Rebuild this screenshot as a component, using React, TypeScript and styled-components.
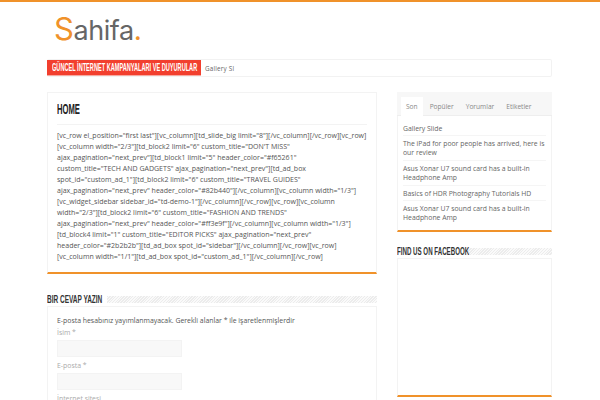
import React from 'react';
import styled, { createGlobalStyle } from 'styled-components';

const GlobalStyle = createGlobalStyle`
  html, body {
    margin: 0;
    padding: 0;
    height: 400px;
    overflow: hidden;
    background: #fff;
    font-family: "Open Sans", "Liberation Sans", sans-serif;
  }
`;

const orange = '#f0922a';
const headingFont = '"Liberation Sans", Arial, sans-serif';

const TopBar = styled.div`
  height: 2px;
  background: ${orange};
`;

const Wrapper = styled.div`
  width: 505px;
  margin-left: 47px;
`;

const LogoRow = styled.div`
  height: 57px;
  padding: 10px 0 0 7px;
  box-sizing: border-box;
  display: flex;
  align-items: baseline;
  font-family: Inter, Lato, sans-serif;
  line-height: 34px;
`;

const LogoLetter = styled.span<{ $accent?: boolean; $size: number; $spacing: number }>`
  font-size: ${(p) => p.$size}px;
  color: ${(p) => (p.$accent ? orange : '#666')};
  font-weight: 400;
  letter-spacing: ${(p) => p.$spacing}px;
`;

// the heading face is a tall condensed one, no installed font has those widths
const Condensed = styled.span<{ $scale: number }>`
  display: inline-block;
  white-space: nowrap;
  transform: scaleX(${(p) => p.$scale});
  transform-origin: left center;
`;

const Ticker = styled.div`
  height: 18px;
  box-sizing: border-box;
  display: flex;
  align-items: center;
  border: 1px solid #f2f2f2;
  border-left: 0;
  border-radius: 2px;
  margin-bottom: 15px;
`;

const TickerLabel = styled.div`
  height: 16px;
  width: 154px;
  flex-shrink: 0;
  box-sizing: border-box;
  padding-left: 5px;
  overflow: hidden;
  background: #f23f2e;
  color: #fff;
  font-family: ${headingFont};
  font-weight: 700;
  font-size: 10px;
  line-height: 15px;
  border-bottom: 1px solid #f7a9a0;
`;

const TickerText = styled.div`
  margin-left: 4px;
  font-size: 6.3px;
  color: #666;
  letter-spacing: 0.2px;
`;

const Columns = styled.div`
  display: flex;
  justify-content: space-between;
  align-items: flex-start;
`;

const Main = styled.div`
  width: 330px;
`;

const Sidebar = styled.div`
  width: 155px;
`;

const Card = styled.div<{ $accent?: boolean }>`
  box-sizing: border-box;
  border: 1px solid #f3f3f3;
  border-bottom: ${(p) => (p.$accent ? `2px solid ${orange}` : '1px solid #f3f3f3')};
  background: #fff;
`;

const PostCard = styled(Card)`
  height: 182px;
  padding: 0 9px;
`;

const PostTitle = styled.h1`
  margin: 0;
  height: 31px;
  border-bottom: 1px solid #f3f3f3;
  font-family: ${headingFont};
  font-size: 15px;
  font-weight: 700;
  line-height: 31px;
  color: #222;
`;

const Shortcode = styled.div`
  padding-top: 5px;
  font-size: 7.03px;
  line-height: 11px;
  color: #555;
  white-space: nowrap;
`;

const SectionHead = styled.div<{ $top: number; $bottom: number }>`
  display: flex;
  align-items: center;
  height: 12px;
  margin: ${(p) => p.$top}px 0 ${(p) => p.$bottom}px;
`;

const SectionTitle = styled.h3<{ $width: number }>`
  margin: 0 5px 0 0;
  width: ${(p) => p.$width}px;
  flex-shrink: 0;
  font-family: ${headingFont};
  font-size: 11px;
  font-weight: 700;
  line-height: 12px;
  color: #333;
`;

const Stripes = styled.div`
  flex: 1;
  height: 7px;
  background: repeating-linear-gradient(135deg, #ececec 0 1px, #fafafa 1px 2px);
`;

const CommentCard = styled(Card)`
  height: 94px;
  padding: 8px 9px 0;
  border-bottom: 0;
  overflow: hidden;
`;

const Notice = styled.p`
  margin: 0 0 3px;
  font-size: 6.9px;
  line-height: 11px;
  color: #555;
  white-space: nowrap;
`;

const FieldLabel = styled.label`
  display: block;
  margin-bottom: 3px;
  font-size: 6.9px;
  line-height: 8px;
  color: #aaa;
`;

const FieldBox = styled.div`
  width: 125px;
  height: 16.5px;
  margin-bottom: 5.5px;
  background: #f8f8f8;
  border: 1px solid #f3f3f3;
  box-sizing: border-box;
`;

const TabBar = styled.div`
  height: 24px;
  padding: 5px 0 0 4px;
  box-sizing: border-box;
  display: flex;
  background: #f7f7f7;
  border-bottom: 1px solid #eee;
`;

const Tab = styled.div<{ $active?: boolean }>`
  height: 19px;
  padding: 0 5px;
  margin-right: 2px;
  font-size: 6.6px;
  line-height: 20px;
  color: #888;
  background: ${(p) => (p.$active ? '#fff' : 'transparent')};
`;

const TabCard = styled(Card)`
  height: 116px;
  border-top: 0;
`;

const PostList = styled.ul`
  list-style: none;
  margin: 0;
  padding: 4.5px 5px 0;
`;

const PostItem = styled.li`
  padding: 3px 0 2.3px;
  border-bottom: 1px solid #f5f5f5;
  font-size: 6.85px;
  line-height: 9.25px;
  color: #666;
  white-space: nowrap;
  &:last-child {
    border-bottom: 0;
  }
`;

const FacebookCard = styled(Card)`
  height: 139px;
`;

const shortcodeLines = [
  '[vc_row el_position="first last"][vc_column][td_slide_big limit="8"][/vc_column][/vc_row][vc_row]',
  '[vc_column width="2/3"][td_block2 limit="6" custom_title="DON\'T MISS"',
  'ajax_pagination="next_prev"][td_block1 limit="5" header_color="#f65261"',
  'custom_title="TECH AND GADGETS" ajax_pagination="next_prev"][td_ad_box',
  'spot_id="custom_ad_1"][td_block2 limit="6" custom_title="TRAVEL GUIDES"',
  'ajax_pagination="next_prev" header_color="#82b440"][/vc_column][vc_column width="1/3"]',
  '[vc_widget_sidebar sidebar_id="td-demo-1"][/vc_column][/vc_row][vc_row][vc_column',
  'width="2/3"][td_block2 limit="6" custom_title="FASHION AND TRENDS"',
  'ajax_pagination="next_prev" header_color="#ff3e9f"][/vc_column][vc_column width="1/3"]',
  '[td_block4 limit="1" custom_title="EDITOR PICKS" ajax_pagination="next_prev"',
  'header_color="#2b2b2b"][td_ad_box spot_id="sidebar"][/vc_column][/vc_row][vc_row]',
  '[vc_column width="1/1"][td_ad_box spot_id="custom_ad_1"][/vc_column][/vc_row]',
];

const recentPosts = [
  ['Gallery Slide'],
  ['The iPad for poor people has arrived, here is', 'our review'],
  ['Asus Xonar U7 sound card has a built-in', 'Headphone Amp'],
  ['Basics of HDR Photography Tutorials HD'],
  ['Asus Xonar U7 sound card has a built-in', 'Headphone Amp'],
];

const tabs = ['Son', 'Popüler', 'Yorumlar', 'Etiketler'];

const App = () => {
  return (
    <>
      <GlobalStyle />
      <TopBar />
      <Wrapper>
        <LogoRow>
          <LogoLetter $accent $size={31} $spacing={-0.5}>S</LogoLetter>
          <LogoLetter $size={27} $spacing={-0.4}>ahifa</LogoLetter>
          <LogoLetter $accent $size={28} $spacing={0}>.</LogoLetter>
        </LogoRow>
        <Ticker>
          <TickerLabel>
            <Condensed $scale={0.56}>GÜNCEL İNTERNET KAMPANYALARI VE DUYURULAR</Condensed>
          </TickerLabel>
          <TickerText>Gallery Sl</TickerText>
        </Ticker>
        <Columns>
          <Main>
            <PostCard $accent>
              <PostTitle>
                <Condensed $scale={0.51}>HOME</Condensed>
              </PostTitle>
              <Shortcode>
                {shortcodeLines.map((line) => (
                  <div key={line}>{line}</div>
                ))}
              </Shortcode>
            </PostCard>
            <SectionHead $top={19} $bottom={1}>
              <SectionTitle $width={55}>
                <Condensed $scale={0.59}>BIR CEVAP YAZIN</Condensed>
              </SectionTitle>
              <Stripes />
            </SectionHead>
            <CommentCard>
              <Notice>E-posta hesabınız yayımlanmayacak. Gerekli alanlar * ile işaretlenmişlerdir</Notice>
              <FieldLabel>İsim *</FieldLabel>
              <FieldBox />
              <FieldLabel>E-posta *</FieldLabel>
              <FieldBox />
              <FieldLabel>İnternet sitesi</FieldLabel>
            </CommentCard>
          </Main>
          <Sidebar>
            <TabBar>
              {tabs.map((tab, i) => (
                <Tab key={tab} $active={i === 0}>{tab}</Tab>
              ))}
            </TabBar>
            <TabCard $accent>
              <PostList>
                {recentPosts.map((lines, i) => (
                  <PostItem key={i}>
                    {lines.map((line) => (
                      <div key={line}>{line}</div>
                    ))}
                  </PostItem>
                ))}
              </PostList>
            </TabCard>
            <SectionHead $top={13} $bottom={1}>
              <SectionTitle $width={66}>
                <Condensed $scale={0.56}>FIND US ON FACEBOOK</Condensed>
              </SectionTitle>
              <Stripes />
            </SectionHead>
            <FacebookCard $accent />
          </Sidebar>
        </Columns>
      </Wrapper>
    </>
  );
};

export default App;
